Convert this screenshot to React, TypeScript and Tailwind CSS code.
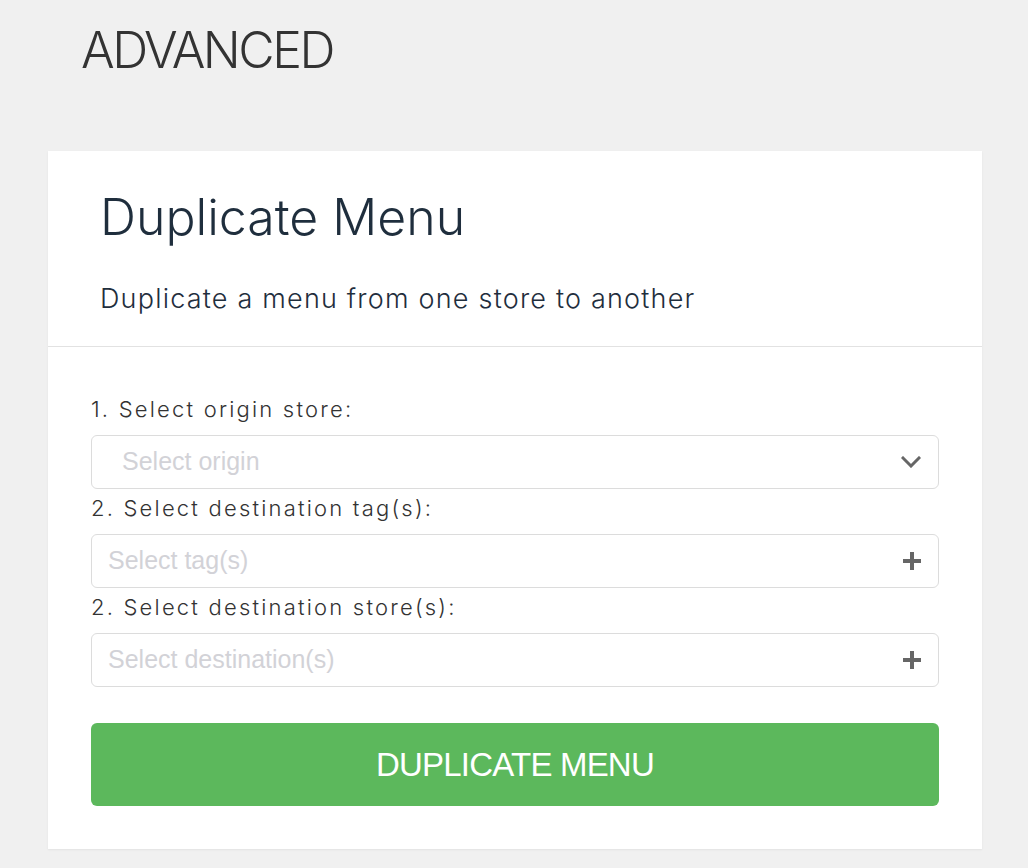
const light = { fontFamily: 'Inter, "Liberation Sans", sans-serif', fontWeight: 300 }

const Chevron = () => (
  <svg width="20" height="12" viewBox="0 0 20 12" fill="none">
    <path d="M2 2l8 8 8-8" stroke="#666" strokeWidth="3" strokeLinecap="square" />
  </svg>
)

const Plus = () => (
  <svg width="18" height="18" viewBox="0 0 18 18" fill="none">
    <path d="M9 0v18M0 9h18" stroke="#666" strokeWidth="4" />
  </svg>
)

interface FieldProps {
  label: string
  placeholder: string
  icon: React.ReactNode
  indent?: boolean
}

const Field = ({ label, placeholder, icon, indent }: FieldProps) => (
  <div>
    <label className="block text-[22px] leading-[30px] tracking-[2.2px] text-[#333]" style={light}>
      {label}
    </label>
    <div
      className={`mt-[11px] flex h-[54px] items-center justify-between rounded-[6px] border border-[#dcdcdc] bg-white pr-[17px] ${
        indent ? 'pl-[30px]' : 'pl-[16px]'
      }`}
    >
      <span className="font-['Liberation_Sans',sans-serif] text-[25px] text-[#d2d2d7]">{placeholder}</span>
      {icon}
    </div>
  </div>
)

export default function App() {
  return (
    <div className="min-h-screen bg-[#f0f0f0] pb-[19px]">
      <h1 className="pl-[81px] pt-[22px] text-[50px] leading-[56px] tracking-[-2.5px] text-[#333]" style={light}>
        ADVANCED
      </h1>
      <div className="ml-[48px] mt-[73px] w-[934px] bg-white shadow-[0_1px_2px_rgba(0,0,0,0.06)]">
        <div className="h-[196px] border-b border-[#e2e2e2] pl-[52px] pt-[36px]">
          <h2 className="text-[50px] leading-[60px] text-[#1f2e3d]" style={light}>
            Duplicate Menu
          </h2>
          <p className="mt-[34px] text-[27px] leading-[36px] tracking-[1.2px] text-[#1f2e3d]" style={light}>
            Duplicate a menu from one store to another
          </p>
        </div>
        <div className="px-[43px] pb-[43px] pt-[47px]">
          <div className="flex flex-col gap-[4px]">
            <Field label="1. Select origin store:" placeholder="Select origin" icon={<Chevron />} indent />
            <Field label="2. Select destination tag(s):" placeholder="Select tag(s)" icon={<Plus />} />
            <Field label="2. Select destination store(s):" placeholder="Select destination(s)" icon={<Plus />} />
          </div>
          <button className="mt-[36px] flex h-[83px] w-full items-center justify-center rounded-[6px] bg-[#5cb85c] font-['Liberation_Sans',sans-serif] text-[33px] tracking-[-0.8px] text-white">
            DUPLICATE MENU
          </button>
        </div>
      </div>
    </div>
  )
}
